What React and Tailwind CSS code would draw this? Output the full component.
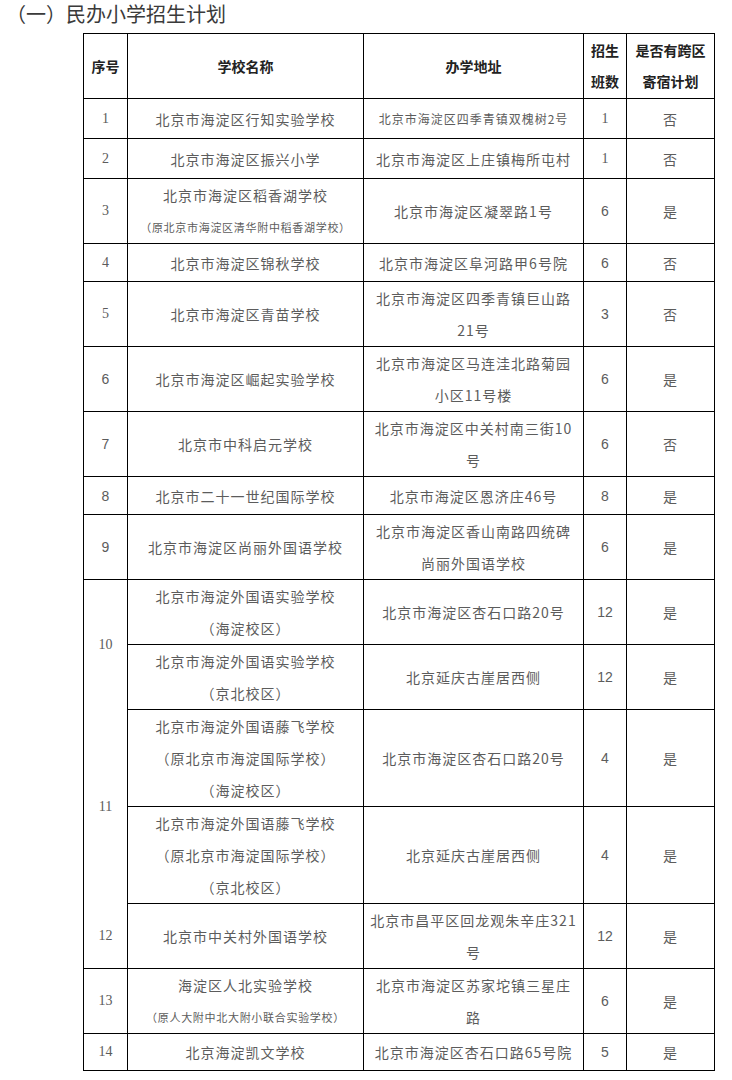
import React from 'react';

const CJK = { fontFamily: '"Noto Sans CJK SC", "Noto Sans", sans-serif' };
const SERIF = { fontFamily: '"Liberation Serif", "Noto Sans CJK SC", serif' };
const SANS = { fontFamily: '"Liberation Sans", "Noto Sans CJK SC", sans-serif' };

// each row: no / name lines / address lines / classes / cross-district boarding
const ROWS = [
  { no: '1', name: ['北京市海淀区行知实验学校'], addr: ['北京市海淀区四季青镇双槐树2号'], addrSmall: true, n: '1', cross: '否', h: 'h-[40px]', serif: true },
  { no: '2', name: ['北京市海淀区振兴小学'], addr: ['北京市海淀区上庄镇梅所屯村'], n: '1', cross: '否', h: 'h-[40px]', serif: true },
  { no: '3', name: ['北京市海淀区稻香湖学校'], sub: '（原北京市海淀区清华附中稻香湖学校）', addr: ['北京市海淀区凝翠路1号'], n: '6', cross: '是', h: 'h-[65px]', serif: true },
  { no: '4', name: ['北京市海淀区锦秋学校'], addr: ['北京市海淀区阜河路甲6号院'], n: '6', cross: '否', h: 'h-[38px]', serif: true },
  { no: '5', name: ['北京市海淀区青苗学校'], addr: ['北京市海淀区四季青镇巨山路', '21号'], n: '3', cross: '否', h: 'h-[65px]', serif: true },
  { no: '6', name: ['北京市海淀区崛起实验学校'], addr: ['北京市海淀区马连洼北路菊园', '小区11号楼'], n: '6', cross: '是', h: 'h-[65px]' },
  { no: '7', name: ['北京市中科启元学校'], addr: ['北京市海淀区中关村南三街10', '号'], n: '6', cross: '否', h: 'h-[65px]' },
  { no: '8', name: ['北京市二十一世纪国际学校'], addr: ['北京市海淀区恩济庄46号'], n: '8', cross: '是', h: 'h-[38px]' },
  { no: '9', name: ['北京市海淀区尚丽外国语学校'], addr: ['北京市海淀区香山南路四统碑', '尚丽外国语学校'], n: '6', cross: '是', h: 'h-[65px]' },
  { no: 'merged', name: ['北京市海淀外国语实验学校', '（海淀校区）'], addr: ['北京市海淀区杏石口路20号'], n: '12', cross: '是', h: 'h-[65px]' },
  { name: ['北京市海淀外国语实验学校', '（京北校区）'], addr: ['北京延庆古崖居西侧'], n: '12', cross: '是', h: 'h-[65px]' },
  { name: ['北京市海淀外国语藤飞学校', '（原北京市海淀国际学校）', '（海淀校区）'], addr: ['北京市海淀区杏石口路20号'], n: '4', cross: '是', h: 'h-[97px]' },
  { name: ['北京市海淀外国语藤飞学校', '（原北京市海淀国际学校）', '（京北校区）'], addr: ['北京延庆古崖居西侧'], n: '4', cross: '是', h: 'h-[97px]' },
  { name: ['北京市中关村外国语学校'], addr: ['北京市昌平区回龙观朱辛庄321', '号'], n: '12', cross: '是', h: 'h-[65px]' },
  { no: '13', name: ['海淀区人北实验学校'], sub: '（原人大附中北大附小联合实验学校）', addr: ['北京市海淀区苏家坨镇三星庄', '路'], n: '6', cross: '是', h: 'h-[65px]', serif: true },
  { no: '14', name: ['北京海淀凯文学校'], addr: ['北京市海淀区杏石口路65号院'], n: '5', cross: '是', h: 'h-[37px]', serif: true },
];

const cell = 'border border-black p-0 text-center align-middle';

function Lines({ lines }) {
  return lines.map((l, i) => (
    <div key={i} className="whitespace-nowrap">{l}</div>
  ));
}

export default function App() {
  return (
    <div className="bg-white w-[732px] min-h-[1080px] text-[#5c5c5c]" style={CJK}>
      <h3 className="pl-[6px] h-[33px] text-[20px] leading-[28px] font-normal text-[#3a3a3a]">
        （一）民办小学招生计划
      </h3>

      <table className="ml-[83px] w-[631px] table-fixed border-collapse">
        <colgroup>
          <col className="w-[44px]" />
          <col className="w-[236px]" />
          <col className="w-[220px]" />
          <col className="w-[43px]" />
          <col className="w-[88px]" />
        </colgroup>
        <thead>
          <tr className="h-[65px] text-[14px] font-bold text-[#222] leading-[31px]">
            <th className={cell}>序号</th>
            <th className={cell}>学校名称</th>
            <th className={cell}>办学地址</th>
            <th className={cell}>
              <div>招生</div>
              <div>班数</div>
            </th>
            <th className={cell}>
              <div>是否有跨区</div>
              <div>寄宿计划</div>
            </th>
          </tr>
        </thead>
        <tbody className="text-[14px] leading-[32px] tracking-[1px]">
          {ROWS.map((r, i) => (
            <tr key={i} className={r.h}>
              {r.no === 'merged' ? (
                <td className={cell + ' tracking-normal'} rowSpan={5} style={SERIF}>
                  <div className="flex flex-col">
                    <div className="h-[130px] flex items-center justify-center">10</div>
                    <div className="h-[194px] flex items-center justify-center">11</div>
                    <div className="h-[64px] flex items-center justify-center">12</div>
                  </div>
                </td>
              ) : r.no ? (
                <td className={cell + ' tracking-normal'} style={r.serif ? SERIF : SANS}>{r.no}</td>
              ) : null}
              <td className={cell}>
                <Lines lines={r.name} />
                {r.sub && (
                  <div className="whitespace-nowrap text-[11px] tracking-[0.7px]">{r.sub}</div>
                )}
              </td>
              <td className={cell + (r.addrSmall ? ' text-[12px]' : '')}>
                <Lines lines={r.addr} />
              </td>
              <td className={cell + ' tracking-normal'} style={r.serif && i < 2 ? SERIF : SANS}>{r.n}</td>
              <td className={cell}>{r.cross}</td>
            </tr>
          ))}
        </tbody>
      </table>
    </div>
  );
}
